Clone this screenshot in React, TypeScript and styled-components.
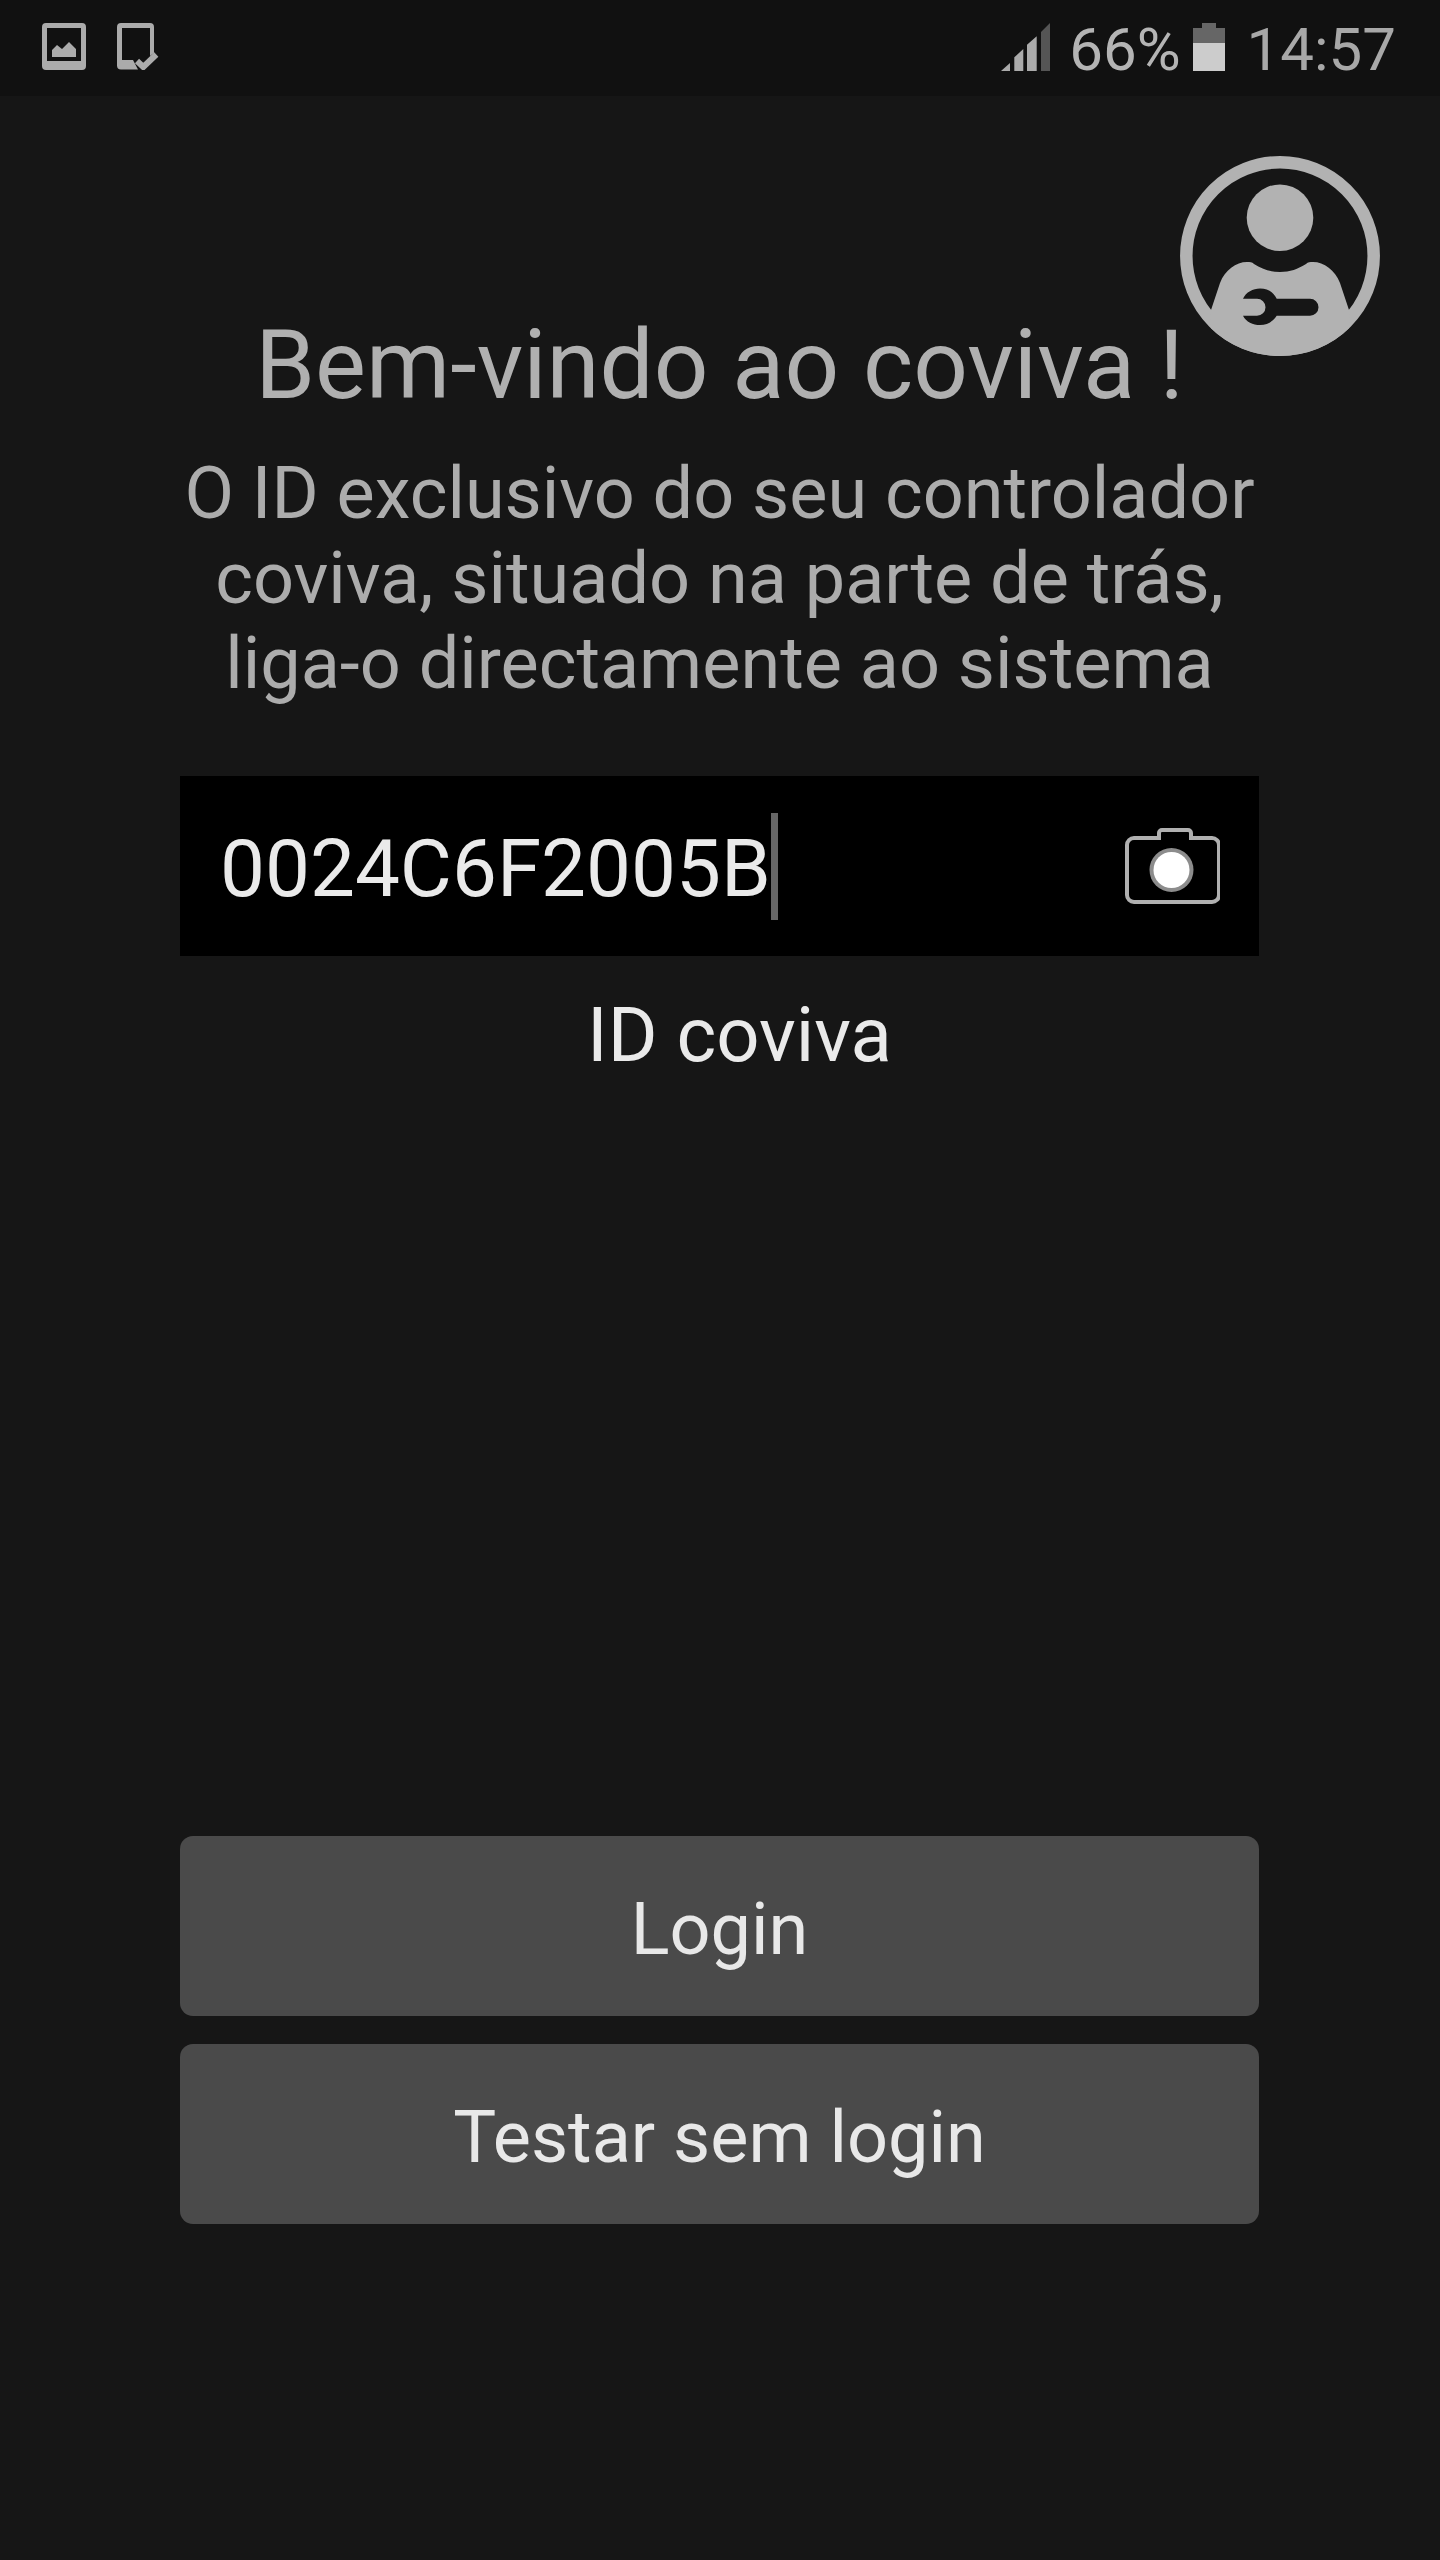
import React from "react";
import styled, { createGlobalStyle } from "styled-components";

const Global = createGlobalStyle`
  html, body { margin: 0; padding: 0; background: #161616; }
  * { box-sizing: border-box; }
`;

const Page = styled.div`
  position: relative;
  width: 1440px;
  height: 2560px;
  background: #161616;
  font-family: Roboto, "Liberation Sans", sans-serif;
  display: flex;
  flex-direction: column;
  overflow: hidden;
`;

const StatusBar = styled.header`
  height: 96px;
  background: #111111;
  display: flex;
  align-items: flex-start;
  justify-content: space-between;
  padding: 23px 44px 0 42px;
`;

const StatusGroup = styled.div`
  display: flex;
  align-items: flex-start;
`;

const StatusText = styled.span<{ $color: string; $left: number }>`
  font-size: 60px;
  line-height: 48px;
  margin-top: 3px;
  margin-left: ${(p) => p.$left}px;
  color: ${(p) => p.$color};
  letter-spacing: 0;
`;

const TabletIcon = styled.svg`
  margin-left: 31px;
`;

const BatteryIcon = styled.svg`
  margin-left: 12px;
`;

const Avatar = styled.svg`
  position: absolute;
  left: 1180px;
  top: 156px;
`;

const Main = styled.main`
  display: flex;
  flex-direction: column;
  align-items: center;
  padding: 209px 1px 0 0;
`;

const Title = styled.h1`
  margin: 0;
  height: 120px;
  font-size: 96px;
  line-height: 120px;
  font-weight: 400;
  color: #b0b0b0;
  text-align: center;
`;

const Subtitle = styled.p`
  margin: 26px 0 0;
  width: 1200px;
  font-size: 72px;
  line-height: 85px;
  color: #acacac;
  text-align: center;
`;

const Field = styled.div`
  margin-top: 70px;
  width: 1079px;
  height: 180px;
  background: #000;
  display: flex;
  align-items: center;
  justify-content: space-between;
  padding: 0 39px 0 40px;
`;

const FieldValue = styled.div`
  display: flex;
  align-items: center;
  font-size: 80px;
  line-height: 107px;
  color: #eaeaea;
`;

const FieldText = styled.span`
  padding-top: 7px;
`;

const Caret = styled.span`
  flex: 0 0 7px;
  height: 107px;
  background: #666;
`;

const FieldLabel = styled.div`
  margin-top: 34px;
  width: 1079px;
  padding-left: 40px;
  font-size: 76px;
  line-height: 90px;
  color: #eaeaea;
  text-align: center;
`;

const Buttons = styled.div`
  margin-top: 756px;
  display: flex;
  flex-direction: column;
  gap: 28px;
`;

const Button = styled.button`
  width: 1079px;
  height: 180px;
  border: 0;
  border-radius: 13px;
  padding: 7px 0 0;
  background: #4a4a4a;
  color: #e8e8e8;
  font-family: inherit;
  font-size: 72px;
  line-height: 90px;
`;

export default function App() {
  return (
    <Page>
      <Global />
      <StatusBar>
        <StatusGroup>
          <svg width="44" height="47" viewBox="0 0 44 47">
            <path
              fillRule="evenodd"
              fill="#ababab"
              d="M4 0h36a4 4 0 0 1 4 4v39a4 4 0 0 1-4 4H4a4 4 0 0 1-4-4V4a4 4 0 0 1 4-4zM5 5v33h34V5z"
            />
            <path fill="#ababab" d="M10 34V27l5-5 5 4 7-7 7 7v8z" />
          </svg>
          <TabletIcon width="44" height="47" viewBox="0 0 44 47">
            <path
              fill="#ababab"
              d="M4 0h29a4 4 0 0 1 4 4v26l-4 3V5H5v32h11l5 9.500H4a4 4 0 0 1-4-4V4a4 4 0 0 1 4-4z"
            />
            <path fill="none" stroke="#ababab" strokeWidth="6" d="M20 38l6.300 6 13-12.500" />
          </TabletIcon>
        </StatusGroup>
        <StatusGroup>
          <svg width="49" height="48" viewBox="0 0 49 48">
            <path
              fill="#ababab"
              d="M0 48l9-8v8zM13.300 48V34.300l9-8.300v22zM26 48V21.700l9.700-8.400v34.700z"
            />
            <path fill="#555" d="M40 48V9l9-9v48z" />
          </svg>
          <StatusText $color="#b4b4b4" $left={19}>66%</StatusText>
          <BatteryIcon width="32" height="48" viewBox="0 0 32 48">
            <path fill="#666" d="M9 0h14v5h9v15H0V5h9z" />
            <rect y="20" width="32" height="28" fill="#cccccc" />
          </BatteryIcon>
          <StatusText $color="#a8a8a8" $left={22}>14:57</StatusText>
        </StatusGroup>
      </StatusBar>

      <Avatar width="200" height="200" viewBox="0 0 200 200">
        <defs>
          <clipPath id="avatar-disc">
            <circle cx="100" cy="100" r="100" />
          </clipPath>
        </defs>
        <circle cx="100" cy="100" r="93.700" fill="none" stroke="#b2b2b2" strokeWidth="12.500" />
        <circle cx="100" cy="61.700" r="33.300" fill="#b2b2b2" />
        <path
          clipPath="url(#avatar-disc)"
          fill="#b2b2b2"
          d="M31 154L40 127C45 114 56 106 67 106C70 106 72 106 74 108C82 113 90 116 100 116C110 116 118 113 126 108C128 106 130 106 133 106C144 106 155 114 160 127L169 154L170 210H30z"
        />
        <path
          fill="#161616"
          d="M63 142.700h14a8 8 0 0 1 0 17H63C66 166 73 169 80 169C88 169 93 165 96.700 159.700H130a8.500 8.500 0 0 0 0-17H96.700C93 136 88 132.400 80 132.400C73 132.400 66 136 63 142.700z"
        />
      </Avatar>

      <Main>
        <Title>Bem-vindo ao coviva !</Title>
        <Subtitle>
          O ID exclusivo do seu controlador
          <br />
          coviva, situado na parte de trás,
          <br />
          liga-o directamente ao sistema
        </Subtitle>
        <Field>
          <FieldValue>
            <FieldText>0024C6F2005B</FieldText>
            <Caret />
          </FieldValue>
          <svg width="96" height="76" viewBox="0 0 96 76">
            <path
              fill="none"
              stroke="#b0b0b0"
              strokeWidth="4"
              d="M10 10h25V5a3 3 0 0 1 3-3h26a3 3 0 0 1 3 3v5h21a7 7 0 0 1 7 7v50a7 7 0 0 1-7 7H10a7 7 0 0 1-7-7V17a7 7 0 0 1 7-7z"
            />
            <circle cx="47.500" cy="42" r="22" fill="#8c8c8c" />
            <circle cx="47.500" cy="42" r="18" fill="#ffffff" />
          </svg>
        </Field>
        <FieldLabel>ID coviva</FieldLabel>
        <Buttons>
          <Button>Login</Button>
          <Button>Testar sem login</Button>
        </Buttons>
      </Main>
    </Page>
  );
}
